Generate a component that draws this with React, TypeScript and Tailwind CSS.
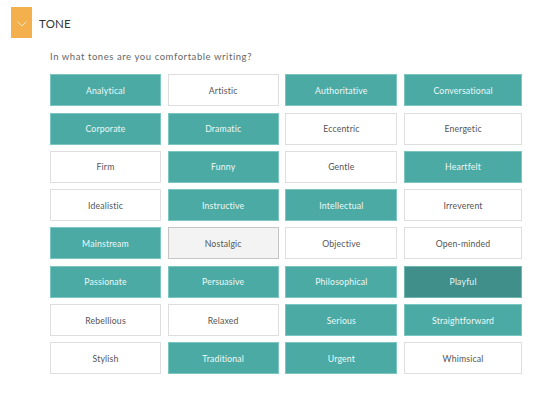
import { useState } from 'react';

const tones = [
  'Analytical', 'Artistic', 'Authoritative', 'Conversational',
  'Corporate', 'Dramatic', 'Eccentric', 'Energetic',
  'Firm', 'Funny', 'Gentle', 'Heartfelt',
  'Idealistic', 'Instructive', 'Intellectual', 'Irreverent',
  'Mainstream', 'Nostalgic', 'Objective', 'Open-minded',
  'Passionate', 'Persuasive', 'Philosophical', 'Playful',
  'Rebellious', 'Relaxed', 'Serious', 'Straightforward',
  'Stylish', 'Traditional', 'Urgent', 'Whimsical',
];

const initial = [
  'Analytical', 'Authoritative', 'Conversational', 'Corporate', 'Dramatic',
  'Funny', 'Heartfelt', 'Instructive', 'Intellectual', 'Mainstream',
  'Passionate', 'Persuasive', 'Philosophical', 'Playful', 'Serious',
  'Straightforward', 'Traditional', 'Urgent',
];

export default function App() {
  const [selected, setSelected] = useState<string[]>(initial);
  const toggle = (t: string) =>
    setSelected(s => (s.includes(t) ? s.filter(x => x !== t) : [...s, t]));

  return (
    <div className="w-[558px] h-[393px] bg-white" style={{ fontFamily: 'Lato, "Open Sans", sans-serif' }}>
      {/* Header */}
      <div className="flex items-start pt-[7px] pl-[11px]">
        <div className="w-[21px] h-[31px] bg-[#f5b04e] flex justify-center pt-[14px]">
          <svg width="10" height="6" viewBox="0 0 10 6" fill="none">
            <path d="M0.5 0.5l4.5 4.5L9.5 0.5" stroke="#fde7c4" strokeWidth="1" />
          </svg>
        </div>
        <span className="ml-[7px] mt-[10px] text-[11.5px] leading-[14px] text-[#333] tracking-[0.02em]">TONE</span>
      </div>

      <div className="pl-[50px]">
        <p className="mt-[12px] text-[9.5px] text-[#666] tracking-[0.06em]">In what tones are you comfortable writing?</p>

        <div className="grid grid-cols-[111px_111px_112px_118px] gap-x-[6.7px] gap-y-[6.3px] mt-[10px]">
          {tones.map(t => {
            const on = selected.includes(t);
            const hover = t === 'Playful';
            const focus = t === 'Nostalgic';
            return (
              <button
                key={t}
                onClick={() => toggle(t)}
                className={
                  'h-[32px] text-[8.7px] tracking-[0.02em] flex items-center justify-center ' +
                  (on
                    ? hover
                      ? 'bg-[#408f8b] text-[#e8f4f3] border border-[#6fb5b0]'
                      : 'bg-[#4baaa4] text-[#eef8f7] border border-[#7cc6c1]'
                    : focus
                    ? 'bg-[#f3f3f3] text-[#555] border-[1.5px] border-[#c4c4c4]'
                    : 'bg-white text-[#555] border border-[#dedede]')
                }
              >
                {t}
              </button>
            );
          })}
        </div>
      </div>
    </div>
  );
}
